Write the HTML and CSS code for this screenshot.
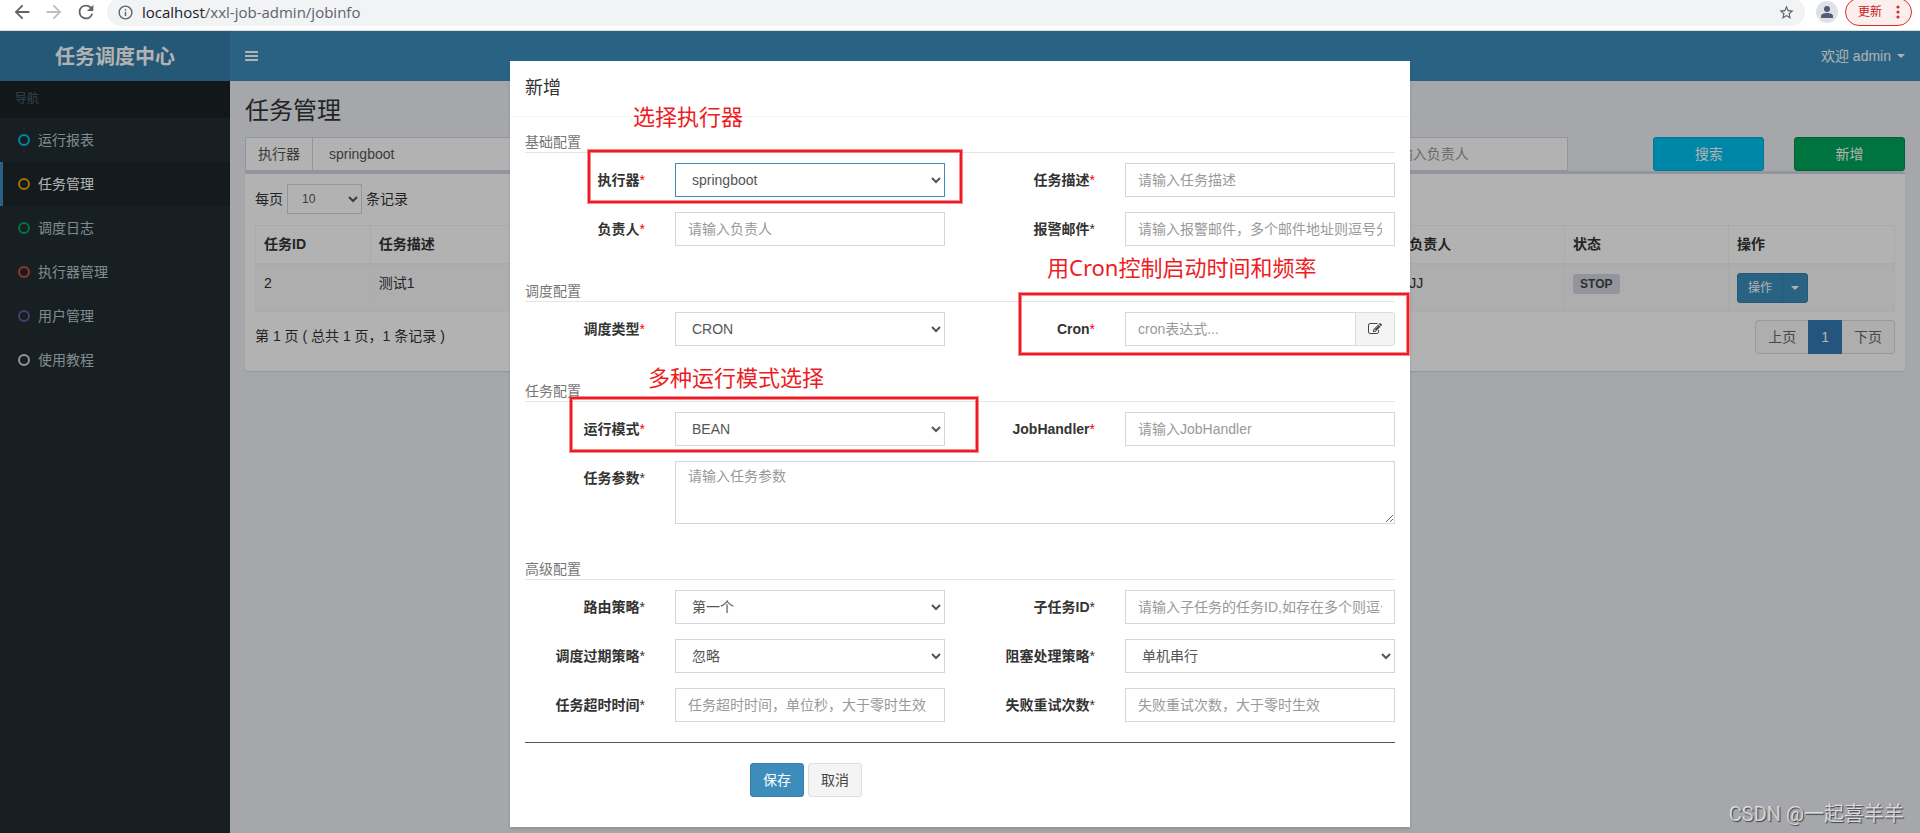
FILE: index.html
```html
<!DOCTYPE html>
<html lang="zh-CN">
<head>
<meta charset="utf-8">
<title>任务调度中心</title>
<link rel="stylesheet" href="styles.css">
</head>
<body>
<div class="browser-bar">
  <button class="bar-icon" type="button" aria-label="后退"><svg viewBox="0 0 24 24" width="22" height="22" fill="#5f6368"><path d="M20 11H7.83l5.59-5.59L12 4l-8 8 8 8 1.41-1.41L7.83 13H20z"/></svg></button>
  <button class="bar-icon" type="button" aria-label="前进"><svg viewBox="0 0 24 24" width="22" height="22" fill="#bbbdc0"><path d="M12 4l-1.41 1.41L16.17 11H4v2h12.17l-5.58 5.59L12 20l8-8z"/></svg></button>
  <button class="bar-icon" type="button" aria-label="刷新"><svg viewBox="0 0 24 24" width="22" height="22" fill="#5f6368"><path d="M17.65 6.35A7.96 7.96 0 0 0 12 4a8 8 0 1 0 7.73 10h-2.08A6 6 0 1 1 12 6c1.66 0 3.14.69 4.22 1.78L13 11h7V4z"/></svg></button>
  <div class="address">
    <svg viewBox="0 0 24 24" width="17" height="17" fill="#5f6368"><path d="M11 7h2v2h-2zm0 4h2v6h-2zm1-9a10 10 0 1 0 0 20 10 10 0 0 0 0-20zm0 18a8 8 0 1 1 0-16 8 8 0 0 1 0 16z"/></svg>
    <span class="url"><span class="host">localhost</span>/xxl-job-admin/jobinfo</span>
    <svg viewBox="0 0 24 24" width="17" height="17" fill="#5f6368"><path d="M22 9.24l-7.19-.62L12 2 9.19 8.63 2 9.24l5.46 4.73L5.82 21 12 17.27 18.18 21l-1.63-7.03zM12 15.4l-3.76 2.27 1-4.28-3.32-2.88 4.38-.38L12 6.1l1.71 4.04 4.38.38-3.32 2.88 1 4.28z"/></svg>
  </div>
  <span class="avatar"><svg viewBox="0 0 22 22" width="22" height="22" fill="#535c72"><circle cx="11" cy="8" r="3"/><path d="M5 17v-2c0-2 3-3 6-3s6 1 6 3v2z"/></svg></span>
  <button class="update" type="button">更新<svg viewBox="0 0 4 16" width="4" height="16" fill="#d93025"><circle cx="2" cy="3" r="1.6"/><circle cx="2" cy="8" r="1.6"/><circle cx="2" cy="13" r="1.6"/></svg></button>
</div>

<div class="app">
  <header class="main-header">
    <a class="logo" href="#">任务调度中心</a>
    <nav class="navbar">
      <button class="toggle" type="button" aria-label="菜单"><svg viewBox="0 0 13 12" width="13" height="12" fill="#fff"><path d="M0 1h13v2H0zM0 5h13v2H0zM0 9h13v2H0z"/></svg></button>
      <a class="user" href="#">欢迎 admin <span class="caret"></span></a>
    </nav>
  </header>
  <div class="wrapper">
    <aside class="sidebar">
      <div class="nav-title">导航</div>
      <a class="item" href="#"><span class="ring aqua"></span>运行报表</a>
      <a class="item active" href="#"><span class="ring yellow"></span>任务管理</a>
      <a class="item" href="#"><span class="ring green"></span>调度日志</a>
      <a class="item" href="#"><span class="ring red"></span>执行器管理</a>
      <a class="item" href="#"><span class="ring purple"></span>用户管理</a>
      <a class="item" href="#"><span class="ring gray"></span>使用教程</a>
    </aside>
    <main class="content">
      <h1>任务管理</h1>
      <div class="filters">
        <div class="group executor">
          <label class="addon" for="f-exec">执行器</label>
          <select id="f-exec" class="control"><option>springboot</option></select>
        </div>
        <div class="owner"><input class="control" type="text" aria-label="负责人" placeholder="请输入负责人"></div>
        <button class="btn info" type="button">搜索</button>
        <button class="btn success" type="button">新增</button>
      </div>
      <section class="box">
        <div class="length">
          <label for="len">每页</label>
          <select id="len" class="control small"><option>10</option></select>
          <span>条记录</span>
        </div>
        <table class="jobs">
          <thead><tr><th class="c-id">任务ID</th><th>任务描述</th><th class="c-s">负责人</th><th class="c-s">状态</th><th class="c-op">操作</th></tr></thead>
          <tbody><tr><td>2</td><td>测试1</td><td>JJ</td><td><span class="badge">STOP</span></td>
            <td><div class="btn-group"><button class="btn primary sm" type="button">操作</button><button class="btn primary sm drop" type="button" aria-label="展开"><span class="caret"></span></button></div></td></tr></tbody>
        </table>
        <div class="table-foot">
          <div class="summary">第 1 页 ( 总共 1 页，1 条记录 )</div>
          <nav class="pages"><a href="#">上页</a><a class="current" href="#">1</a><a href="#">下页</a></nav>
        </div>
      </section>
    </main>
  </div>

  <div class="backdrop">
    <div class="modal" role="dialog" aria-labelledby="modal-title">
      <h4 id="modal-title">新增</h4>
      <form class="modal-body">
        <p class="section">基础配置</p>
        <div class="fields">
          <label for="exec">执行器<span class="star req">*</span></label>
          <div class="cell"><select id="exec" class="control focus"><option>springboot</option></select></div>
          <label for="desc">任务描述<span class="star req">*</span></label>
          <div class="cell"><input id="desc" class="control" type="text" placeholder="请输入任务描述"></div>
          <label for="author">负责人<span class="star req">*</span></label>
          <div class="cell"><input id="author" class="control" type="text" placeholder="请输入负责人"></div>
          <label for="mail">报警邮件<span class="star">*</span></label>
          <div class="cell"><input id="mail" class="control" type="text" placeholder="请输入报警邮件，多个邮件地址则逗号分隔"></div>
        </div>
        <p class="section">调度配置</p>
        <div class="fields">
          <label for="stype">调度类型<span class="star req">*</span></label>
          <div class="cell"><select id="stype" class="control"><option>CRON</option></select></div>
          <label for="cron">Cron<span class="star req">*</span></label>
          <div class="cell group">
            <input id="cron" class="control" type="text" placeholder="cron表达式...">
            <button class="edit" type="button" aria-label="编辑"><svg viewBox="0 0 1792 1792" width="14" height="14" fill="#444"><path d="M888 1184l116-116-152-152-116 116v56h96v96h56zm440-720q-16-16-33 1l-350 350q-17 17-1 33t33-1l350-350q17-17 1-33zm80 594v190q0 119-84.500 203.500t-203.500 84.500h-832q-119 0-203.500-84.500t-84.500-203.500v-832q0-119 84.500-203.500t203.500-84.500h832q63 0 117 25 15 7 18 23 3 17-9 29l-49 49q-14 14-32 8-23-6-45-6h-832q-66 0-113 47t-47 113v832q0 66 47 113t113 47h832q66 0 113-47t47-113v-126q0-13 9-22l64-64q15-15 35-7t20 29zm-96-738l288 288-672 672h-288v-288zm444 132l-92 92-288-288 92-92q28-28 68-28t68 28l152 152q28 28 28 68t-28 68z"/></svg></button>
          </div>
        </div>
        <p class="section">任务配置</p>
        <div class="fields">
          <label for="mode">运行模式<span class="star req">*</span></label>
          <div class="cell"><select id="mode" class="control"><option>BEAN</option></select></div>
          <label for="handler">JobHandler<span class="star req">*</span></label>
          <div class="cell"><input id="handler" class="control" type="text" placeholder="请输入JobHandler"></div>
          <label for="param">任务参数<span class="star">*</span></label>
          <div class="cell wide"><textarea id="param" class="control area" placeholder="请输入任务参数"></textarea></div>
        </div>
        <p class="section">高级配置</p>
        <div class="fields">
          <label for="route">路由策略<span class="star">*</span></label>
          <div class="cell"><select id="route" class="control"><option>第一个</option></select></div>
          <label for="child">子任务ID<span class="star">*</span></label>
          <div class="cell"><input id="child" class="control" type="text" placeholder="请输入子任务的任务ID,如存在多个则逗号分隔"></div>
          <label for="misfire">调度过期策略<span class="star">*</span></label>
          <div class="cell"><select id="misfire" class="control"><option>忽略</option></select></div>
          <label for="block">阻塞处理策略<span class="star">*</span></label>
          <div class="cell"><select id="block" class="control"><option>单机串行</option></select></div>
          <label for="timeout">任务超时时间<span class="star">*</span></label>
          <div class="cell"><input id="timeout" class="control" type="text" placeholder="任务超时时间，单位秒，大于零时生效"></div>
          <label for="retry">失败重试次数<span class="star">*</span></label>
          <div class="cell"><input id="retry" class="control" type="text" placeholder="失败重试次数，大于零时生效"></div>
        </div>
        <div class="actions">
          <button class="btn primary" type="button">保存</button>
          <button class="btn default" type="button">取消</button>
        </div>
      </form>
      <div class="mark mark-exec"></div>
      <div class="mark mark-cron"></div>
      <div class="mark mark-mode"></div>
      <div class="note note-exec">选择执行器</div>
      <div class="note note-cron">用Cron控制启动时间和频率</div>
      <div class="note note-mode">多种运行模式选择</div>
    </div>
    <div class="watermark">CSDN @一起喜羊羊</div>
  </div>
</div>
</body>
</html>
```
FILE: styles.css
```css
* { box-sizing: border-box; }
body {
  margin: 0;
  min-height: 100vh;
  display: flex;
  flex-direction: column;
  font: 14px/20px "Liberation Sans", "Noto Sans CJK SC", sans-serif;
  color: #333;
}
a { color: inherit; text-decoration: none; }
button, input, select, textarea { font: inherit; }
button { cursor: pointer; }
svg { display: block; flex: none; }

/* Browser toolbar */
.browser-bar {
  height: 31px;
  flex: none;
  display: flex;
  align-items: center;
  padding: 0 8px 6px 11px;
  background: #fff;
  border-bottom: 1px solid #dadce0;
  overflow: hidden;
}
.bar-icon { border: 0; background: none; padding: 0; margin-right: 10px; }
.address {
  flex: 1;
  height: 28px;
  display: flex;
  align-items: center;
  gap: 8px;
  padding: 0 10px;
  border-radius: 14px;
  background: #f1f3f4;
}
.url { flex: 1; font: 15px/20px "Open Sans", sans-serif; color: #5f6368; }
.host { color: #202124; }
.avatar { width: 22px; height: 22px; margin: 0 7px 0 11px; border-radius: 50%; background: #dee1e6; }
.update {
  flex: none;
  width: 67px;
  height: 28px;
  display: flex;
  align-items: center;
  justify-content: space-between;
  padding: 0 11px 0 12px;
  border: 1px solid #d93025;
  border-radius: 14px;
  background: #fceeed;
  color: #c5221f;
  font-size: 12px;
}

/* Page frame */
.app { position: relative; flex: 1; display: flex; flex-direction: column; }
.main-header { display: flex; height: 50px; color: #fff; }
.logo {
  width: 230px;
  background: #367fa9;
  font-size: 20px;
  font-weight: bold;
  line-height: 52px;
  text-align: center;
}
.navbar {
  flex: 1;
  display: flex;
  align-items: center;
  justify-content: space-between;
  padding: 0 15px;
  background: #3c8dbc;
}
.toggle { border: 0; padding: 0; background: none; }
.user { display: flex; align-items: center; gap: 6px; }
.caret { border: 4px solid transparent; border-top-color: currentColor; border-bottom: 0; }
.wrapper { flex: 1; display: flex; }
.sidebar { width: 230px; background: #222d32; color: #b8c7ce; }
.nav-title { padding: 8px 15px 9px; background: #1a2226; color: #4b646f; font-size: 12px; }
.item {
  display: flex;
  align-items: center;
  gap: 8px;
  height: 44px;
  padding-left: 15px;
  border-left: 3px solid transparent;
}
.item.active { border-color: #3c8dbc; background: #1e282c; color: #fff; }
.ring { width: 12px; height: 12px; border: 2px solid; border-radius: 50%; }
.aqua { color: #00c0ef; }
.yellow { color: #f39c12; }
.green { color: #00a65a; }
.red { color: #dd4b39; }
.purple { color: #605ca8; }
.gray { color: #d2d6de; }

/* Job list */
.content { flex: 1; min-width: 0; padding: 15px; background: #ecf0f5; }
h1 { margin: 0; padding: 1px 0 12px; font-size: 24px; font-weight: normal; line-height: 28px; }
.filters {
  display: grid;
  grid-template-columns: repeat(12, 1fr);
  column-gap: 30px;
}
.group { display: flex; }
.executor { grid-column: 1 / span 3; }
.owner { grid-column: 9 / span 2; }
.owner .control { width: 196px; }
.addon {
  flex: none;
  padding: 6px 12px;
  border: 1px solid #d2d6de;
  border-right: 0;
  background: #fff;
  color: #555;
}
.control {
  display: block;
  width: 100%;
  height: 34px;
  padding: 6px 12px;
  border: 1px solid #d2d6de;
  border-radius: 0;
  background: #fff;
  color: #555;
  outline: 0;
}
.control::placeholder { color: #999; }
.control.focus { border-color: #3c8dbc; }
.control.small { width: 75px; height: 30px; padding: 4px 10px; font-size: 12px; }
.btn {
  height: 34px;
  padding: 6px 12px;
  border: 1px solid;
  border-radius: 3px;
  color: #fff;
}
.info { background: #00c0ef; border-color: #00acd6; }
.success { background: #00a65a; border-color: #008d4c; }
.primary { background: #3c8dbc; border-color: #367fa9; }
.default { background: #f4f4f4; border-color: #ddd; color: #444; }
.sm { height: 30px; padding: 4px 10px; font-size: 12px; }
.btn-group { display: flex; }
.btn-group .btn:first-child { border-radius: 3px 0 0 3px; }
.btn-group .drop { margin-left: -1px; border-radius: 0 3px 3px 0; padding: 4px 8px; }
.drop .caret { display: block; }
.box {
  padding: 10px;
  border-top: 3px solid #d2d6de;
  border-radius: 3px;
  background: #fff;
  box-shadow: 0 1px 1px rgba(0, 0, 0, .1);
}
.length { display: flex; align-items: center; gap: 4px; margin-bottom: 11px; }
.jobs { width: 100%; border-collapse: collapse; table-layout: fixed; }
.jobs th, .jobs td { padding: 8px; border: 1px solid #f4f4f4; text-align: left; vertical-align: top; }
.jobs th { padding-bottom: 9px; border-bottom-width: 2px; }
.jobs td { background: #f9f9f9; }
.c-id { width: 7%; }
.c-s { width: 10%; }
.c-op { width: 166px; }
.badge {
  display: inline-block;
  padding: 0 7px;
  border-radius: 3px;
  background: #d2d6de;
  color: #444;
  font-size: 12px;
  font-weight: bold;
}
.table-foot { display: flex; justify-content: space-between; padding: 8px 0 7px; }
.summary { padding-top: 6px; }
.pages { display: flex; }
.pages a { padding: 6px 12px; border: 1px solid #ddd; background: #fafafa; color: #666; }
.pages a:first-child { border-radius: 4px 0 0 4px; border-right: 0; }
.pages a:last-child { border-radius: 0 4px 4px 0; border-left: 0; }
.pages .current { border-color: #337ab7; background: #337ab7; color: #fff; }

/* Dialog */
.backdrop { position: absolute; inset: 0; padding-top: 30px; background: rgba(0, 0, 0, .3); }
.modal {
  position: relative;
  width: 900px;
  margin: 0 auto;
  background: #fff;
  box-shadow: 0 2px 3px rgba(0, 0, 0, .125);
}
.modal h4 {
  margin: 0;
  padding: 15px;
  border-bottom: 1px solid #f4f4f4;
  font-size: 18px;
  font-weight: normal;
  line-height: 25px;
}
.modal-body { padding: 15px 15px 30px; }
.section { margin: 0 0 10px; border-bottom: 1px solid #e5e5e5; color: #777; }
.fields + .section { margin-top: 35px; }
.fields { display: grid; grid-template-columns: 2fr 4fr 2fr 4fr; gap: 15px 0; margin: 0 -15px; }
.fields label { padding: 7px 15px; font-weight: bold; text-align: right; }
.cell { padding: 0 15px; }
.wide { grid-column: span 3; }
.star { font-weight: normal; }
.req { color: #f00; }
.area { height: 63px; padding-top: 4px; resize: vertical; }
.edit {
  flex: none;
  width: 40px;
  margin-left: -1px;
  display: flex;
  align-items: center;
  justify-content: center;
  border: 1px solid #ddd;
  border-radius: 0 3px 3px 0;
  background: #f4f4f4;
}
.actions {
  display: flex;
  gap: 4px;
  margin-top: 20px;
  padding: 20px 0 0 225px;
  border-top: 1px solid #555;
}

/* Annotations drawn over the dialog */
.mark {
  position: absolute;
  border: 2px solid #ed1c24;
  box-shadow: 0 0 0 1px rgba(237, 28, 36, .5), inset 0 0 0 1px rgba(237, 28, 36, .5);
}
.mark-exec { left: 78px; top: 89px; width: 374px; height: 53px; }
.mark-cron { left: 509px; top: 232px; width: 390px; height: 62px; }
.mark-mode { left: 60px; top: 336px; width: 408px; height: 55px; }
.note {
  position: absolute;
  color: #ed1c24;
  font: 22px/30px "Noto Sans", "Noto Sans CJK SC", sans-serif;
  white-space: nowrap;
}
.note-exec { left: 123px; top: 40px; }
.note-cron { left: 537px; top: 191px; }
.note-mode { left: 138px; top: 301px; }
.watermark {
  position: absolute;
  right: 16px;
  bottom: 4px;
  color: rgba(255, 255, 255, .7);
  font: 20px/30px Roboto, "Noto Sans CJK SC", sans-serif;
  text-shadow: 1px 1px 1px rgba(0, 0, 0, .6);
}
```
